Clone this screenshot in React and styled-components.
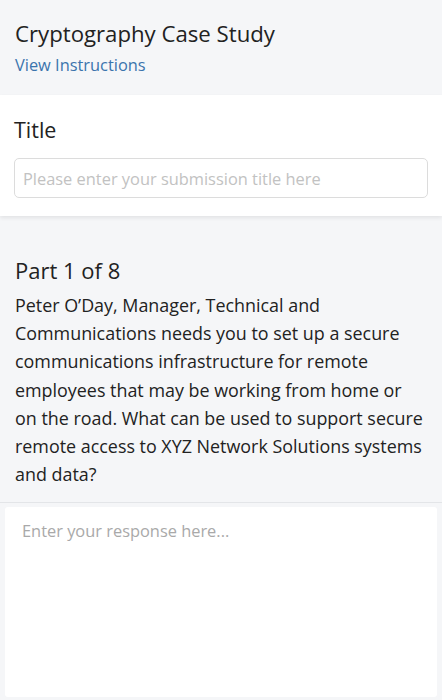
import React from 'react';
import styled, { createGlobalStyle } from 'styled-components';

const GlobalStyle = createGlobalStyle`
    body {
        margin: 0;
        background: #f5f6f8;
        font-family: "Open Sans", "Noto Sans", sans-serif;
        color: #222;
    }
`

const Page = styled.div`
    width: 442px;
    min-height: 700px;
    display: flex;
    flex-direction: column;
`

const Header = styled.div`
    padding: 18px 15px 18px;
`

const CaseTitle = styled.div`
    font-size: 22.2px;
    line-height: 32px;
    color: #222;
`

const InstructionsLink = styled.a`
    display: block;
    margin-top: 3px;
    font-size: 16.4px;
    line-height: 24px;
    color: #3b74ad;
    text-decoration: none;
`

const TitleCard = styled.div`
    background: #fff;
    padding: 20px 14px 18px;
    box-shadow: 0 2px 4px rgba(0, 0, 0, 0.08);
`

const Label = styled.div`
    font-size: 21.5px;
    line-height: 30px;
    color: #222;
    margin-bottom: 13px;
`

const TitleInput = styled.input`
    box-sizing: border-box;
    width: 100%;
    height: 40px;
    padding: 0 8px;
    border: 1px solid #dcdcdc;
    border-radius: 5px;
    font-family: inherit;
    font-size: 16.4px;
    color: #222;
    outline: none;

    &::placeholder {
        color: #c2c2c2;
    }
`

const PartSection = styled.div`
    padding: 38px 16px 14px 15px;
    border-bottom: 1px solid #e3e5e8;
`

const PartTitle = styled.div`
    font-size: 22px;
    line-height: 32px;
    color: #222;
    margin-bottom: 5px;
`

const Prompt = styled.p`
    margin: 0;
    font-size: 17.9px;
    line-height: 28.2px;
    color: #222;
`

const ResponseArea = styled.textarea`
    box-sizing: border-box;
    display: block;
    margin: 4px 5px 0;
    width: 432px;
    height: 190px;
    padding: 12px 17px;
    border: none;
    border-radius: 3px;
    background: #fff;
    resize: none;
    font-family: inherit;
    font-size: 16.4px;
    line-height: 24px;
    color: #222;
    outline: none;

    &::placeholder {
        color: #a9a9a9;
    }
`

function App() {
    return (
        <Page>
            <GlobalStyle />
            <Header>
                <CaseTitle>Cryptography Case Study</CaseTitle>
                <InstructionsLink href="#">View Instructions</InstructionsLink>
            </Header>
            <TitleCard>
                <Label>Title</Label>
                <TitleInput placeholder="Please enter your submission title here" />
            </TitleCard>
            <PartSection>
                <PartTitle>Part 1 of 8</PartTitle>
                <Prompt>
                    Peter O’Day, Manager, Technical and Communications needs you to set up a secure communications infrastructure for remote employees that may be working from home or on the road. What can be used to support secure remote access to XYZ Network Solutions systems and data?
                </Prompt>
            </PartSection>
            <ResponseArea placeholder="Enter your response here..." />
        </Page>
    )
}

export default App;
